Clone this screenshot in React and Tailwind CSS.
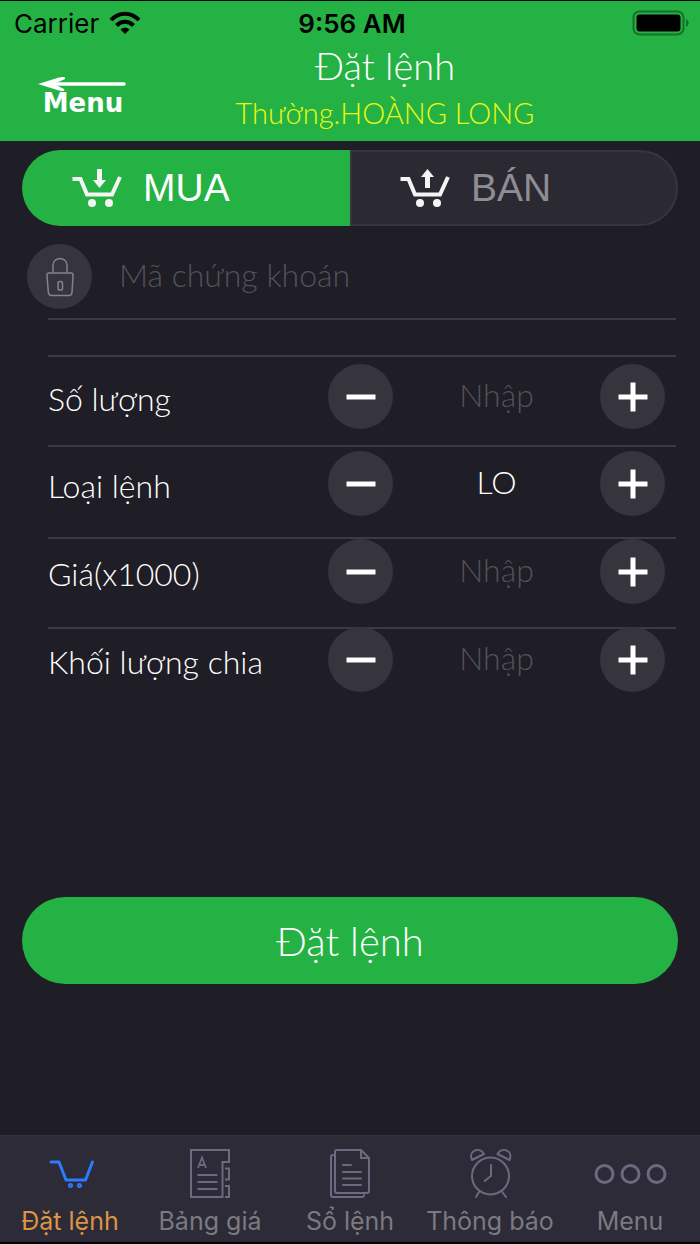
import React, { useState } from 'react';

function WifiIcon() {
    return (
        <svg viewBox="0 0 32 24" className="w-8 h-6" fill="none" stroke="#000" strokeWidth="4" aria-hidden="true">
            <path d="M2 9 C10 0.5 22 0.5 30 9" />
            <path d="M7.5 14.5 C12.5 9.5 19.5 9.5 24.5 14.5" />
            <path d="M16 23 L11.5 18.5 C14 16 18 16 20.5 18.5 Z" fill="#000" stroke="none" />
        </svg>
    );
}

function BatteryIcon() {
    return (
        <svg viewBox="0 0 58 26" className="w-[58px] h-[26px]" aria-hidden="true">
            <rect x="1.5" y="1.5" width="50" height="23" rx="6" fill="none" stroke="#17702b" strokeWidth="2" />
            <rect x="4.5" y="4.5" width="44" height="17" rx="3" fill="#000" />
            <path d="M54 9 C57.5 10.5 57.5 15.5 54 17 Z" fill="#17702b" />
        </svg>
    );
}

function CartIcon({ direction }) {
    return (
        <svg viewBox="0 0 52 40" className="w-[52px] h-10" fill="none" stroke="#f4f4f4" aria-hidden="true">
            <path d="M1.5 11 H9.5 L16 26.5 H41 L49 9" strokeWidth="4" />
            <circle cx="21" cy="35" r="4" fill="#f4f4f4" stroke="none" />
            <circle cx="38" cy="35" r="4" fill="#f4f4f4" stroke="none" />
            {direction === 'down' ? (
                <path d="M26 1 H31 V12 H35 L28.500 20 L22 12 H26 Z" fill="#f4f4f4" stroke="none" />
            ) : (
                <path d="M26 20 H31 V9 H35 L28.500 1 L22 9 H26 Z" fill="#f4f4f4" stroke="none" />
            )}
        </svg>
    );
}

function LockIcon() {
    return (
        <svg viewBox="0 0 28 40" className="w-7 h-10" fill="none" stroke="#83838f" strokeWidth="1.5" aria-hidden="true">
            <path d="M7 16 V8.5 C7 -0.8 21 -0.8 21 8.5 V16" />
            <path d="M3 16 H25 Q27.3 16 27 19 L26 35.5 Q25.7 38.5 23 38.5 H5.5 Q2.7 38.5 2.4 35.5 L1 19 Q0.7 16 3 16 Z" />
            <rect x="12.1" y="24.5" width="4.4" height="8.5" rx="1.8" />
        </svg>
    );
}

const tabs = [
    {
        label: 'Đặt lệnh',
        icon: (
            <g stroke="#2b7bff" strokeWidth="3" strokeLinecap="round" strokeLinejoin="round">
                <path d="M17 14 H25 L32 32 H51.500 L58.500 14" />
                <circle cx="36.500" cy="37.500" r="1" />
                <circle cx="45.500" cy="37.500" r="1" />
            </g>
        ),
    },
    {
        label: 'Bảng giá',
        icon: (
            <g>
                <path d="M17 2 H55 V14 H48.500 V49 H17 Z" />
                <path d="M51 20.500 H55 V31.500 H51 M51 38 H55 V49 H51" />
                <path d="M24 20 L28 9.500 L32 20 M25.500 17 H30.500" strokeWidth="1.8" />
                <path d="M23.500 27 H43.500 M23.500 34 H43.500 M23.500 41 H43.500" />
            </g>
        ),
    },
    {
        label: 'Sổ lệnh',
        icon: (
            <g strokeLinejoin="round" strokeLinecap="round">
                <path d="M23 2 H47 L55 10 V43 Q55 45 53 45 H23 Q21 45 21 43 V4 Q21 2 23 2 Z" />
                <path d="M47 2 V10 H55" />
                <path d="M19 7 Q17 7 17 9 V47 Q17 49 19 49 H48 Q50 49 50 47" />
                <path d="M29 17 H37 M29 24 H47 M29 30.500 H47 M29 37 H47" />
            </g>
        ),
    },
    {
        label: 'Thông báo',
        icon: (
            <g strokeLinejoin="round" strokeLinecap="round">
                <circle cx="36.500" cy="28" r="18.500" />
                <path d="M37 17 V28 L30.500 33" />
                <path d="M25.500 43 L22 49 M47.500 43 L52 49" />
                <path d="M18 12 C14 3 25 -2 30 6 Z M55.500 12 C59.500 3 48.500 -2 43.500 6 Z" />
            </g>
        ),
    },
    {
        label: 'Menu',
        icon: (
            <g strokeWidth="3">
                <circle cx="10.500" cy="26" r="8.500" />
                <circle cx="36.500" cy="26" r="8.500" />
                <circle cx="62.500" cy="26" r="8.500" />
            </g>
        ),
    },
];

function RoundButton({ label, onClick, plus }) {
    return (
        <button type="button" aria-label={label} onClick={onClick} className="size-[65px] shrink-0 rounded-full bg-[#36353e] flex items-center justify-center">
            <svg viewBox="0 0 30 30" className="size-[30px]" stroke="#fff" strokeWidth="5" aria-hidden="true">
                <path d="M0.500 15 H29.500" />
                {plus && <path d="M15 0.500 V29.500" />}
            </svg>
        </button>
    );
}

// The divider is an inset shadow so that the round buttons can cover it
function StepperRow({ id, label, value, onChange, onStep, className }) {
    return (
        <div className={`ml-12 mr-6 pr-[11px] shadow-[inset_0_2px_#3d3a44] flex items-start ${className}`}>
            <label htmlFor={id} className="flex-1 h-[65px] pt-1 flex items-center text-[32px] text-white">{label}</label>
            <div className="w-[337px] flex items-center justify-between">
                <RoundButton label={`Giảm ${label}`} onClick={() => onStep(-1)} />
                <input
                    id={id}
                    value={value}
                    placeholder="Nhập"
                    onChange={(e) => onChange(e.target.value)}
                    className="w-[180px] h-[60px] mb-1 bg-transparent text-center text-[32px] text-white placeholder:text-[#535258] outline-none"
                />
                <RoundButton label={`Tăng ${label}`} onClick={() => onStep(1)} plus />
            </div>
        </div>
    );
}

const fields = [
    { id: 'quantity', label: 'Số lượng', className: 'pt-[9px] h-[90px]' },
    { id: 'type', label: 'Loại lệnh', className: 'pt-1.5 h-[92px]' },
    { id: 'price', label: 'Giá(x1000)', className: 'pt-0.5 h-[90px]' },
    { id: 'split', label: 'Khối lượng chia', className: 'h-[90px]' },
];
const orderTypes = ['LO', 'ATO', 'ATC', 'MP'];

export default function App() {
    const [side, setSide] = useState('buy');
    const [values, setValues] = useState({ quantity: '', type: 'LO', price: '', split: '' });

    const setValue = (id, value) => setValues({ ...values, [id]: value });
    const step = (id, delta) => {
        if (id === 'type') {
            const next = orderTypes.indexOf(values.type) + delta + orderTypes.length;
            setValue(id, orderTypes[next % orderTypes.length]);
            return;
        }
        setValue(id, String(Math.max(0, Number(values[id] || 0) + delta)));
    };

    return (
        <div className="min-h-screen flex flex-col bg-[#1f1d26] font-['Lato',sans-serif] font-light border-t border-b-2 border-black">
            <header className="bg-[#24b244] h-[140px]">
                <div className="grid grid-cols-3 items-center h-11 pl-3.5 pr-2.5 font-['Inter',sans-serif] text-black text-[26px]">
                    <div className="flex items-center gap-2.5 font-normal">
                        Carrier <WifiIcon />
                    </div>
                    <div className="text-center font-semibold">9:56 AM</div>
                    <div className="flex justify-end"><BatteryIcon /></div>
                </div>
                <div className="grid grid-cols-[140px_1fr_140px]">
                    <button type="button" className="mt-7 ml-[38px] w-[90px] h-11 flex flex-col items-center text-white font-['DejaVu_Sans',sans-serif] font-bold text-[26px]">
                        <svg viewBox="0 0 90 18" className="w-[90px] h-[18px] shrink-0" fill="none" stroke="#fff" strokeLinecap="round" aria-hidden="true">
                            <path d="M8 11 H86" strokeWidth="3.5" />
                            <path d="M0 11 L21 4.500 Q28 3 27 6 L16 11 L26 16 Q28 19 21 17.500 Z" fill="#fff" stroke="none" />
                        </svg>
                        <span className="leading-6">Menu</span>
                    </button>
                    <div className="text-center ml-[68px] -mr-[2px]">
                        <h1 className="text-[38px] leading-10 text-white">Đặt lệnh</h1>
                        <p className="text-[29px] leading-[56px] text-[#eef913]">Thường.HOÀNG LONG</p>
                    </div>
                </div>
            </header>

            <main className="flex-1">
                <div className="mx-[22px] mt-[9px] grid grid-cols-2 h-[76px] font-['Liberation_Sans',sans-serif] font-normal text-[39px]">
                    <button type="button" aria-pressed={side === 'buy'} onClick={() => setSide('buy')} className="rounded-l-full bg-[#24b244] text-white flex items-center pl-[49px] gap-5">
                        <CartIcon direction="down" /> MUA
                    </button>
                    <button type="button" aria-pressed={side === 'sell'} onClick={() => setSide('sell')} className="rounded-r-full bg-[#2b2a33] border-2 border-[#36363e] text-[#8e8d92] flex items-center pl-[47px] gap-5">
                        <CartIcon direction="up" /> BÁN
                    </button>
                </div>

                <div className="flex items-center ml-[27px] mt-[18px]">
                    <div className="size-[65px] rounded-full bg-[#36353e] flex items-center justify-center">
                        <LockIcon />
                    </div>
                    <input
                        aria-label="Mã chứng khoán"
                        placeholder="Mã chứng khoán"
                        className="flex-1 ml-[27px] mr-6 h-[60px] mb-1 bg-transparent text-[32px] text-white placeholder:text-[#535258] outline-none"
                    />
                </div>
                <div className="ml-12 mr-6 mt-[9px] mb-[35px] h-[2px] bg-[#3d3a44]" />

                {fields.map((field) => (
                    <StepperRow
                        key={field.id}
                        id={field.id}
                        label={field.label}
                        className={field.className}
                        value={values[field.id]}
                        onChange={(value) => setValue(field.id, value)}
                        onStep={(delta) => step(field.id, delta)}
                    />
                ))}

                <div className="px-[22px] mt-[180px]">
                    <button type="button" className="w-full h-[87px] rounded-full bg-[#24b244] text-white text-[40px]">Đặt lệnh</button>
                </div>
            </main>

            <nav className="grid grid-cols-5 h-[107px] bg-[#2c2b37] border-t border-[#33343a] font-['Inter',sans-serif] font-normal text-[25px]">
                {tabs.map((tab, index) => (
                    <a key={tab.label} href="#" className={`flex flex-col items-center pt-3 whitespace-nowrap ${index === 0 ? 'text-[#dc9445]' : 'text-[#7b7a80]'}`}>
                        <svg viewBox="0 0 73 52" className="w-[73px] h-[52px] shrink-0" fill="none" stroke="#6d6980" strokeWidth="2" aria-hidden="true">{tab.icon}</svg>
                        <span className="leading-[42px]">{tab.label}</span>
                    </a>
                ))}
            </nav>
        </div>
    );
}
